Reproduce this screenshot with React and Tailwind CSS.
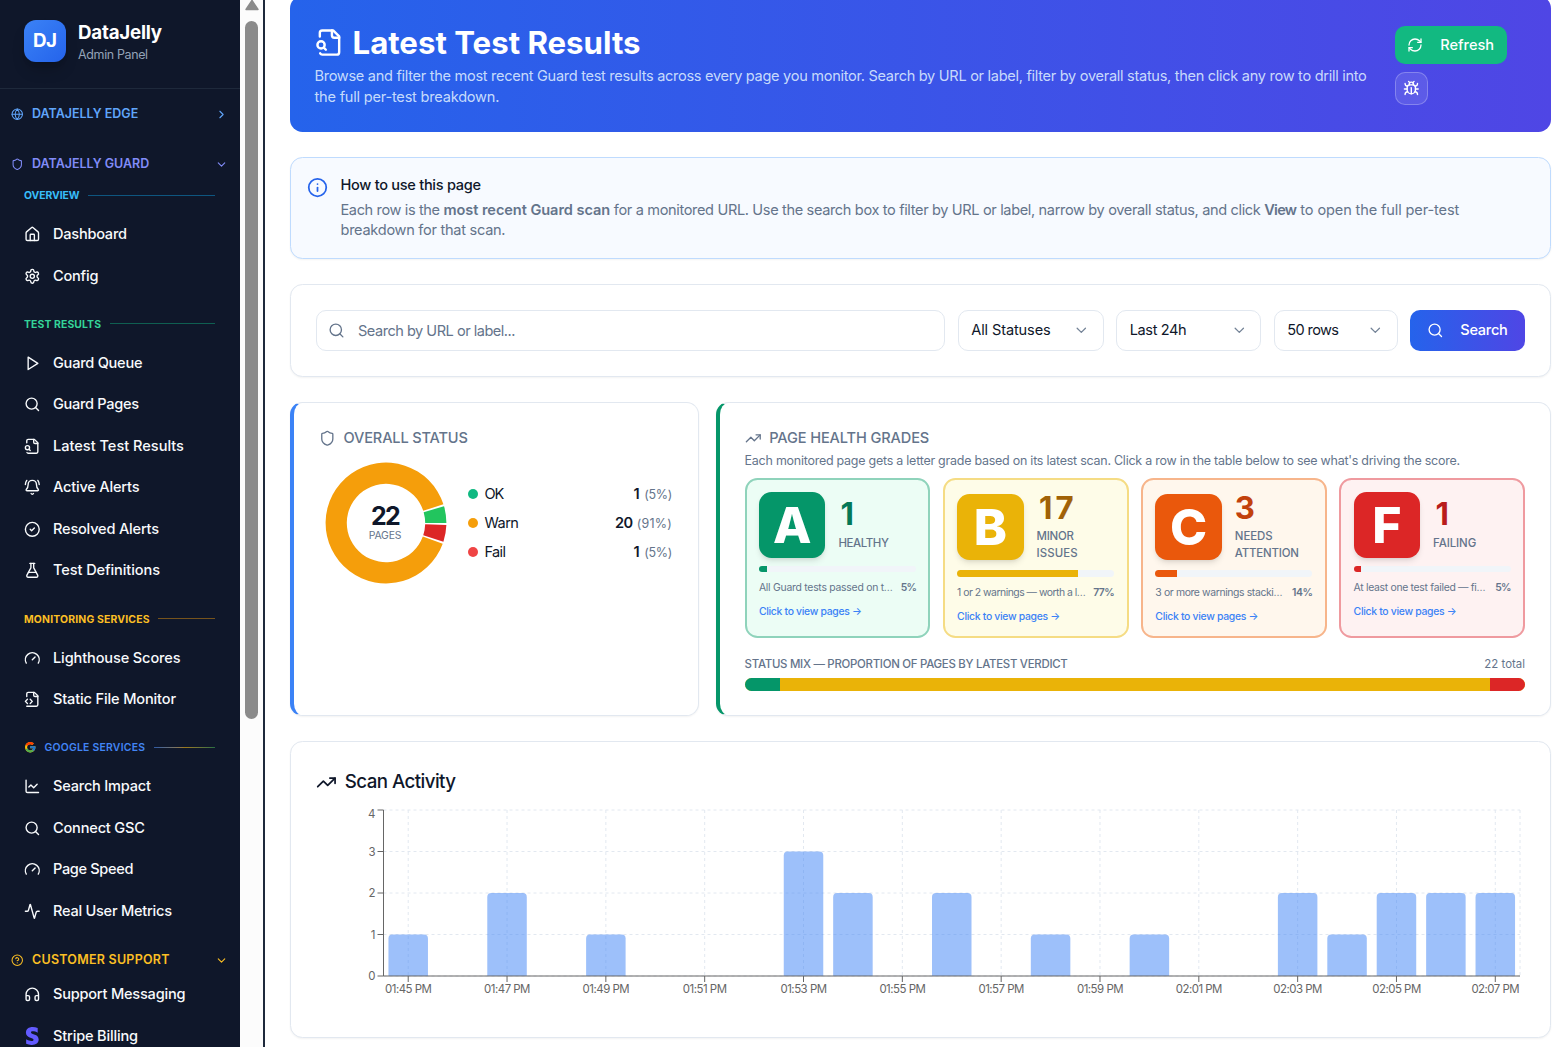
import React from 'react';
import {
  Globe, Shield, ChevronRight, ChevronDown, House, Search, BellRing, CircleCheck, FlaskConical,
  Gauge, ChartLine, Activity, CircleQuestionMark, Headphones, RefreshCw, Bug, Info, TrendingUp,
} from 'lucide-react';
import { FcGoogle } from 'react-icons/fc';
import { FaStripeS } from 'react-icons/fa6';

function Icon({ className, strokeWidth = 2, children }) {
  return (
    <svg viewBox="0 0 24 24" fill="none" stroke="currentColor" strokeWidth={strokeWidth} strokeLinecap="round" strokeLinejoin="round" className={className}>
      {children}
    </svg>
  );
}

const FileSearchIcon = (p) => (
  <Icon {...p}>
    <path d="M14 2v4a2 2 0 0 0 2 2h4" />
    <path d="M4.268 21a2 2 0 0 0 1.727 1H18a2 2 0 0 0 2-2V7l-5-5H6a2 2 0 0 0-2 2v3" />
    <path d="m9 18-1.5-1.5" />
    <circle cx="5" cy="14" r="3" />
  </Icon>
);

const FileCodeIcon = (p) => (
  <Icon {...p}>
    <path d="M4 22h14a2 2 0 0 0 2-2V7l-5-5H6a2 2 0 0 0-2 2v4" />
    <path d="M14 2v4a2 2 0 0 0 2 2h4" />
    <path d="m5 12-3 3 3 3" />
    <path d="m9 18 3-3-3-3" />
  </Icon>
);

const PlayIcon = (p) => (
  <Icon {...p}>
    <polygon points="6 3 20 12 6 21 6 3" />
  </Icon>
);

const GearIcon = (p) => (
  <Icon {...p}>
    <path d="M12.22 2h-.44a2 2 0 0 0-2 2v.18a2 2 0 0 1-1 1.73l-.43.25a2 2 0 0 1-2 0l-.15-.08a2 2 0 0 0-2.73.73l-.22.38a2 2 0 0 0 .73 2.73l.15.1a2 2 0 0 1 1 1.72v.51a2 2 0 0 1-1 1.74l-.15.09a2 2 0 0 0-.73 2.73l.22.38a2 2 0 0 0 2.73.73l.15-.08a2 2 0 0 1 2 0l.43.25a2 2 0 0 1 1 1.73V20a2 2 0 0 0 2 2h.44a2 2 0 0 0 2-2v-.18a2 2 0 0 1 1-1.73l.43-.25a2 2 0 0 1 2 0l.15.08a2 2 0 0 0 2.73-.73l.22-.39a2 2 0 0 0-.73-2.73l-.15-.08a2 2 0 0 1-1-1.74v-.5a2 2 0 0 1 1-1.74l.15-.09a2 2 0 0 0 .73-2.73l-.22-.38a2 2 0 0 0-2.73-.73l-.15.08a2 2 0 0 1-2 0l-.43-.25a2 2 0 0 1-1-1.73V4a2 2 0 0 0-2-2z" />
    <circle cx="12" cy="12" r="3" />
  </Icon>
);

const StripeIcon = () => <FaStripeS className="h-[18px] w-[16.6px] text-[#635bff]" />;

const SECTIONS = [
  {
    title: 'OVERVIEW', track: 'tracking-[-0.08px]', color: 'text-[#38bdf8]', line: 'bg-[#0ea5e9]/45', row: 'h-[24.5px] pb-[12px]',
    items: [
      [House, 'Dashboard', 'tracking-[-0.23px]'],
      [GearIcon, 'Config', 'tracking-[-0.19px]'],
    ],
  },
  {
    title: 'TEST RESULTS', track: 'tracking-[0.12px]', color: 'text-[#34d399]', line: 'bg-[#10b981]/45', row: 'h-[45.6px] pt-[9.2px]',
    items: [
      [PlayIcon, 'Guard Queue', 'tracking-[-0.24px]'],
      [Search, 'Guard Pages', 'tracking-[-0.3px]'],
      [FileSearchIcon, 'Latest Test Results', ''],
      [BellRing, 'Active Alerts', 'tracking-[-0.19px]'],
      [CircleCheck, 'Resolved Alerts', 'tracking-[-0.19px]'],
      [FlaskConical, 'Test Definitions', 'tracking-[-0.08px]'],
    ],
  },
  {
    title: 'MONITORING SERVICES', track: 'tracking-[0.18px]', color: 'text-[#fbbf24]', line: 'bg-[#f59e0b]/45', row: 'h-[45.6px] pt-[9.2px]',
    items: [
      [Gauge, 'Lighthouse Scores', 'tracking-[-0.12px]'],
      [FileCodeIcon, 'Static File Monitor', 'tracking-[-0.14px]'],
    ],
  },
  {
    title: 'GOOGLE SERVICES', google: true, track: 'tracking-[0.24px]', color: 'text-[#4285f4]', line: 'bg-linear-to-r from-[#4285f4]/60 via-[#fbbc05]/60 to-[#34a853]/60', row: 'h-[45.6px] pt-[9.2px]',
    items: [
      [ChartLine, 'Search Impact', 'tracking-[-0.2px]'],
      [Search, 'Connect GSC', 'tracking-[-0.17px]'],
      [Gauge, 'Page Speed', 'tracking-[-0.33px]'],
      [Activity, 'Real User Metrics', 'tracking-[-0.24px]'],
    ],
  },
];

function NavItem({ item: [I, label, track] }) {
  return (
    <div className="flex h-[41.55px] shrink-0 items-center gap-[12.4px] pl-6 text-[14.56px] font-medium text-[#f8fafc]">
      <I className="h-[16.6px] w-[16.6px] shrink-0" strokeWidth={2} />
      <span className={`pt-[1.4px] ${track}`}>{label}</span>
    </div>
  );
}

function GroupRow({ icon: I, label, track = '', color, open, row }) {
  return (
    <div className={`flex shrink-0 items-center pr-3 pl-[11px] text-[12.48px] font-semibold ${row} ${color}`}>
      <I className="mr-[8.5px] h-[12.5px] w-[12.5px]" strokeWidth={2} />
      <span className={track}>{label}</span>
      {open ? <ChevronDown className="ml-auto h-[13px] w-[13px]" /> : <ChevronRight className="ml-auto h-[13px] w-[13px]" />}
    </div>
  );
}

function Sidebar() {
  return (
    <aside className="flex h-full w-[240px] shrink-0 flex-col overflow-hidden bg-[#0f172a]">
      <div className="flex h-[89px] shrink-0 items-start gap-[12.5px] border-b border-[#1e293b] pt-5 pl-6">
        <div className="flex h-[41.6px] w-[41.6px] items-center justify-center rounded-[12px] bg-linear-to-br from-[#3b82f6] to-[#2563eb] text-[18.72px] font-bold tracking-[-0.5px] text-white shadow-lg shadow-black/20">DJ</div>
        <div>
          <div className="text-[18.72px] leading-[25px] font-bold tracking-[-0.23px] text-white">DataJelly</div>
          <div className="text-[12.48px] leading-[19px] tracking-[-0.37px] text-[#94a3b8]">Admin Panel</div>
        </div>
      </div>
      <GroupRow icon={Globe} label="DATAJELLY EDGE" color="text-[#60a5fa]" row="h-[50px]" />
      <GroupRow icon={Shield} label="DATAJELLY GUARD" color="text-[#818cf8]" row="h-[50px]" open />
      {SECTIONS.map((s) => (
        <React.Fragment key={s.title}>
          <div className={`flex shrink-0 items-center pr-[25px] pl-6 ${s.row}`}>
            {s.google && <FcGoogle className="mr-[8px] h-[12.5px] w-[12.5px]" />}
            <span className={`pt-px text-[10.4px] whitespace-nowrap ${s.google ? 'font-semibold' : 'font-bold'} ${s.track} ${s.color}`}>{s.title}</span>
            <span className={`ml-[8.5px] h-px flex-1 ${s.line}`} />
          </div>
          {s.items.map((it) => <NavItem key={it[1]} item={it} />)}
        </React.Fragment>
      ))}
      <GroupRow icon={CircleQuestionMark} label="CUSTOMER SUPPORT" track="tracking-[0.26px]" color="text-[#fbbf24]" row="h-[41.7px] pt-[15px]" open />
      <NavItem item={[Headphones, 'Support Messaging', 'tracking-[-0.21px]']} />
      <NavItem item={[StripeIcon, 'Stripe Billing', 'tracking-[-0.17px]']} />
    </aside>
  );
}

function Scrollbar() {
  return (
    <div className="flex h-full w-[25px] shrink-0 flex-col items-center border-r-2 border-[#1e293b] bg-[#fcfcfc]">
      <svg viewBox="0 0 14 11" className="h-[11px] w-[14px] shrink-0">
        <path d="M7 0.5 L13 9.5 H1 Z" fill="#8b8b8b" stroke="#8b8b8b" strokeWidth="1.4" strokeLinejoin="round" />
      </svg>
      <div className="mt-[10px] h-[698px] w-[13px] rounded-full bg-[#8b8b8b]" />
    </div>
  );
}

function Header() {
  return (
    <header className="-mt-1 flex h-[136px] shrink-0 items-start rounded-[12.5px] bg-linear-to-r/srgb from-[#2563eb] to-[#4f46e5] pt-[28px] pl-[24.5px] text-white">
      <div className="w-[1080.5px] shrink-0 pt-px">
        <h1 className="flex items-center gap-[9px] text-[31.2px] leading-[37.4px] font-bold">
          <FileSearchIcon className="mt-[-3px] h-[29px] w-[29px]" />
          <span>Latest Test Results</span>
        </h1>
        <p className="mt-[4px] text-[14.56px] leading-[20.8px] whitespace-nowrap text-[#dbeafe]/90">
          <span className="tracking-[-0.288px]">Browse and filter the most recent Guard test results across every page you monitor. Search by URL or label, filter by overall status, then click any row to drill into</span>
          <br />
          <span className="tracking-[-0.2px]">the full per-test breakdown.</span>
        </p>
      </div>
      <div className="mt-[2px] flex flex-col gap-[8.3px]">
        <button className="flex h-[37.5px] w-[112px] items-center rounded-[10px] bg-[#12b981] pl-[12px] text-[14.56px] font-medium text-white">
          <RefreshCw className="mr-[17.3px] h-[16px] w-[16px]" strokeWidth={1.9} />
          <span className="pt-[1.6px]">Refresh</span>
        </button>
        <button className="flex h-[33px] w-[33px] items-center justify-center rounded-[10px] border border-white/25 bg-white/10">
          <Bug className="h-[16.6px] w-[16.6px]" />
        </button>
      </div>
    </header>
  );
}

function InfoCard() {
  return (
    <section className="flex h-[102px] shrink-0 rounded-[12.5px] border border-[#bfdbfe] bg-[#f7faff] pl-[16px] shadow-xs">
      <Info className="mt-[18.5px] h-[21px] w-[21px] text-[#2563eb]" />
      <div className="mt-[17px] ml-[12.5px] text-[14.56px] whitespace-nowrap">
        <h2 className="leading-[20.8px] font-medium tracking-[-0.28px] text-[#0f172a]">How to use this page</h2>
        <p className="mt-[4.7px] leading-[20px] text-[#64748b]">
          <span className="tracking-[-0.37px]">Each row is the </span>
          <strong className="font-semibold tracking-[-0.05px]">most recent Guard scan</strong>
          <span className="tracking-[-0.35px]"> for a monitored URL. Use the search box to filter by URL or label, narrow by overall status, and click </span>
          <strong className="font-semibold tracking-[-0.7px]">View</strong>
          <span className="tracking-[-0.12px]"> to open the full per-test</span>
          <br />
          <span className="tracking-[-0.27px]">breakdown for that scan.</span>
        </p>
      </div>
    </section>
  );
}

function Select({ label, className }) {
  return (
    <div className={`flex h-[41.5px] shrink-0 items-center justify-between rounded-[10px] border border-[#e2e8f0] bg-white pr-[13px] pl-[12.5px] text-[14.56px] text-[#0f172a] ${className}`}>
      <span className="pt-[1.6px]">{label}</span>
      <ChevronDown className="h-[16.6px] w-[16.6px] text-[#64748b]/90" strokeWidth={1.8} />
    </div>
  );
}

function Filters() {
  return (
    <section className="flex h-[92.5px] shrink-0 items-center gap-[12.5px] rounded-[12.5px] border border-[#e2e8f0] bg-white px-[25px] shadow-xs">
      <div className="flex h-[41.5px] flex-1 items-center rounded-[10px] border border-[#e2e8f0] pl-[11px] text-[#64748b]">
        <Search className="h-[17px] w-[17px]" strokeWidth={1.9} />
        <span className="ml-[13px] pt-[3px] text-[14.56px] tracking-[-0.49px]">Search by URL or label...</span>
      </div>
      <Select label="All Statuses" className="w-[146px] tracking-[-0.11px]" />
      <Select label="Last 24h" className="w-[145px] tracking-[-0.37px]" />
      <Select label="50 rows" className="w-[124.2px] tracking-[-0.6px]" />
      <button className="flex h-[41.5px] w-[114.6px] items-center rounded-[10px] bg-linear-to-r/srgb from-[#2563eb] to-[#4f46e5] pl-[16.3px] text-[14.56px] font-medium tracking-[-0.27px] text-white">
        <Search className="mr-[17px] h-[16.6px] w-[16.6px]" strokeWidth={1.9} />
        <span className="pt-[1.6px]">Search</span>
      </button>
    </section>
  );
}

function arc(start, end, outer, inner) {
  const pt = (deg, r) => {
    const a = (deg * Math.PI) / 180;
    return `${(61 + r * Math.cos(a)).toFixed(2)} ${(61 - r * Math.sin(a)).toFixed(2)}`;
  };
  const large = end - start > 180 ? 1 : 0;
  return `M${pt(start, outer)} A${outer} ${outer} 0 ${large} 0 ${pt(end, outer)} L${pt(end, inner)} A${inner} ${inner} 0 ${large} 1 ${pt(start, inner)} Z`;
}

const LEGEND = [
  ['OK', '1', '(5%)', 'bg-[#10b981]', 'tracking-[-0.9px]', '', 'tracking-[-0.3px]'],
  ['Warn', '20', '(91%)', 'bg-[#f59e0b]', 'tracking-[-0.5px]', 'tracking-[-0.7px]', 'tracking-[0.2px]'],
  ['Fail', '1', '(5%)', 'bg-[#ef4444]', 'tracking-[-0.6px]', '', 'tracking-[-0.3px]'],
];

function OverallStatus() {
  return (
    <section className="h-[314.5px] w-[409px] shrink-0 rounded-[12.5px] border border-l-4 border-[#e2e8f0] border-l-[#3b82f6] bg-white pt-[25px] pr-[26px] pl-[25px] shadow-xs">
      <h3 className="flex h-[21px] items-center gap-[8px] text-[14.56px] font-medium tracking-[-0.15px] text-[#64748b]">
        <Shield className="h-[16.6px] w-[16.6px]" strokeWidth={1.9} />
        <span className="pt-[1.6px]">OVERALL STATUS</span>
      </h3>
      <div className="mt-[13.6px] flex items-center">
        <div className="ml-[6px] grid h-[122px] w-[122px] shrink-0 place-items-center">
          <svg viewBox="0 0 122 122" className="col-start-1 row-start-1 h-[122px] w-[122px]">
            <path d={arc(0, 16.1, 60.4, 39.2)} fill="#22c55e" />
            <path d={arc(18.1, 339.9, 60.4, 39.2)} fill="#f59e0b" />
            <path d={arc(341.9, 358, 60.4, 39.2)} fill="#dc2626" />
          </svg>
          <div className="col-start-1 row-start-1 flex flex-col items-center pr-[2px]">
            <span className="text-[25px] leading-[25px] font-bold tracking-[-1.8px] text-[#0f172a]">22</span>
            <span className="text-[10.4px] leading-[13px] tracking-[-0.2px] text-[#64748b]">PAGES</span>
          </div>
        </div>
        <ul className="ml-[21px] flex-1">
          {LEGEND.map(([name, n, pct, dot, t1, t2, t3]) => (
            <li key={name} className="flex h-[29px] items-center text-[14.56px] text-[#0f172a]">
              <span className={`mr-[6px] h-[10.4px] w-[10.4px] rounded-full ${dot}`} />
              <span className={`pt-px ${t1}`}>{name}</span>
              <span className={`ml-auto pt-px font-semibold ${t2}`}>{n}</span>
              <span className={`ml-[4.5px] pt-[2px] text-[12.48px] text-[#64748b] ${t3}`}>{pct}</span>
            </li>
          ))}
        </ul>
      </div>
    </section>
  );
}

const GRADES = [
  {
    g: 'A', n: '1', label: ['HEALTHY'], lt: ['tracking-[-0.4px]'], desc: 'All Guard tests passed on t…', dt: 'tracking-[-0.25px]', pct: '5%', pt: 'tracking-[-0.8px]', nc: 'pl-[2px]',
    card: 'border-[#8fd3bb] bg-[#ecfdf5]', tile: 'bg-[#059669]', num: 'text-[#047857]', fill: 'w-[5%] bg-[#059669]',
  },
  {
    g: 'B', n: '17', label: ['MINOR', 'ISSUES'], lt: ['tracking-[-0.3px]', 'tracking-[0.1px]'], desc: '1 or 2 warnings — worth a l…', dt: 'tracking-[-0.5px]', pct: '77%', pt: 'tracking-[-0.5px]', nc: 'pl-[2.5px] tracking-[3px]',
    card: 'border-[#f5dc84] bg-[#fefce8]', tile: 'bg-[#eab308]', num: 'text-[#a16207]', fill: 'w-[77%] bg-[#eab308]',
  },
  {
    g: 'C', n: '3', label: ['NEEDS', 'ATTENTION'], lt: ['tracking-[-0.1px]', 'tracking-[-0.2px]'], desc: '3 or more warnings stacki…', dt: 'tracking-[-0.37px]', pct: '14%', pt: 'tracking-[-0.4px]', nc: '',
    card: 'border-[#f7b58b] bg-[#fff7ed]', tile: 'bg-[#ea580c]', num: 'text-[#c2410c]', fill: 'w-[14%] bg-[#ea580c]',
  },
  {
    g: 'F', n: '1', label: ['FAILING'], lt: ['tracking-[-0.09px]'], desc: 'At least one test failed — fi…', dt: 'tracking-[-0.3px]', pct: '5%', pt: 'tracking-[-0.8px]', nc: 'pl-[2.5px]',
    card: 'border-[#ef9a9f] bg-[#fef2f2]', tile: 'bg-[#dc2626]', num: 'text-[#b91c1c]', fill: 'w-[5%] bg-[#dc2626]',
  },
];

function GradeCard({ d }) {
  return (
    <div className={`h-[160px] rounded-[12.5px] border-2 px-[12.3px] pt-[12px] ${d.card}`}>
      <div className="flex items-center gap-[13px]">
        <div className={`flex h-[66.5px] w-[66.5px] shrink-0 items-center justify-center rounded-[12.5px] text-[50px] leading-none font-extrabold text-white shadow-md ${d.tile}`}>{d.g}</div>
        <div className="pt-[1.5px]">
          <div className={`text-[31.2px] leading-[31.2px] font-bold ${d.num} ${d.nc}`}>{d.n}</div>
          <div className="mt-[4px] text-[11.44px] leading-[17px] font-medium text-[#64748b]">
            {d.label.map((l, i) => <div key={l} className={d.lt[i]}>{l}</div>)}
          </div>
        </div>
      </div>
      <div className="mt-[8.2px] h-[6.2px] overflow-hidden rounded-full bg-[#f1f5f9]">
        <div className={`h-full ${d.fill}`} />
      </div>
      <div className="mt-[8.4px] flex h-[15px] items-center justify-between text-[10.4px] whitespace-nowrap text-[#64748b]">
        <span className={d.dt}>{d.desc}</span>
        <span className={`font-semibold ${d.pt}`}>{d.pct}</span>
      </div>
      <div className="mt-[8.6px] text-[10.4px] leading-[15px] font-medium tracking-[-0.3px] whitespace-nowrap text-[#3b82f6]">Click to view pages →</div>
    </div>
  );
}

function HealthGrades() {
  return (
    <section className="h-[314.5px] flex-1 rounded-[12.5px] border border-l-4 border-[#e2e8f0] border-l-[#059669] bg-white pt-[25px] pr-[25px] pl-[24.6px] shadow-xs">
      <h3 className="flex h-[21px] items-center gap-[8px] text-[14.56px] font-medium tracking-[-0.1px] text-[#64748b]">
        <TrendingUp className="h-[16.6px] w-[16.6px]" strokeWidth={1.9} />
        <span className="pt-[1.6px]">PAGE HEALTH GRADES</span>
      </h3>
      <p className="mt-[3px] text-[12.48px] leading-[18px] tracking-[-0.242px] whitespace-nowrap text-[#64748b]">
        Each monitored page gets a letter grade based on its latest scan. Click a row in the table below to see what's driving the score.
      </p>
      <div className="mt-[8px] grid grid-cols-4 gap-[12.5px]">
        {GRADES.map((d) => <GradeCard key={d.g} d={d} />)}
      </div>
      <div className="mt-[19px] flex h-[16px] items-center justify-between whitespace-nowrap text-[#64748b]">
        <span className="text-[11.44px] font-medium tracking-[-0.285px]">STATUS MIX — PROPORTION OF PAGES BY LATEST VERDICT</span>
        <span className="text-[11.44px]">22 total</span>
      </div>
      <div className="mt-[5px] flex h-[13px] overflow-hidden rounded-full bg-[#eab308]">
        <div className="w-[4.5%] bg-[#059669]" />
        <div className="flex-1 bg-[#eab308]" />
        <div className="w-[4.5%] bg-[#dc2626]" />
      </div>
    </section>
  );
}

const SCANS = [1, 0, 2, 0, 1, 0, 0, 0, 3, 2, 0, 2, 0, 1, 0, 1, 0, 0, 2, 1, 2, 2, 2];
const LABELS = ['01:45 PM', '01:47 PM', '01:49 PM', '01:51 PM', '01:53 PM', '01:55 PM', '01:57 PM', '01:59 PM', '02:01 PM', '02:03 PM', '02:05 PM', '02:07 PM'];
const X0 = 67.5;
const X1 = 1204;
const STEP = (X1 - X0) / 23;
const UNIT = 41.5;
const Y0 = 171;

function barPath(i, v) {
  const w = 39.5;
  const x = X0 + STEP * (i + 0.5) - w / 2;
  const y = Y0 - v * UNIT;
  return `M${x} ${Y0} V${y + 4} Q${x} ${y} ${x + 4} ${y} H${x + w - 4} Q${x + w} ${y} ${x + w} ${y + 4} V${Y0} Z`;
}

function ScanActivity() {
  return (
    <section className="h-[297px] shrink-0 rounded-[12.5px] border border-[#e2e8f0] bg-white px-[25px] pt-[26.5px] shadow-xs">
      <h3 className="flex h-[27px] items-center gap-[8px] text-[18.72px] font-medium tracking-[-0.55px] text-[#0f172a]">
        <TrendingUp className="h-[20.8px] w-[20.8px]" />
        Scan Activity
      </h3>
      <svg viewBox="0 0 1209 210" className="mt-[9.3px] h-[210px] w-[1209px]">
        <g stroke="#e2e8f0" strokeDasharray="3 3">
          {[0, 1, 2, 3, 4].map((v) => <line key={v} x1={X0} x2={X1} y1={Y0 - v * UNIT} y2={Y0 - v * UNIT} />)}
          {LABELS.map((l, i) => <line key={l} x1={X0 + STEP * (2 * i + 0.5)} x2={X0 + STEP * (2 * i + 0.5)} y1={5} y2={Y0} />)}
          <line x1={X1} x2={X1} y1={5} y2={Y0} />
        </g>
        <g fill="#3b82f6" fillOpacity="0.5">
          {SCANS.map((v, i) => (v ? <path key={i} d={barPath(i, v)} /> : null))}
        </g>
        <g stroke="#666">
          <line x1={X0} x2={X0} y1={5} y2={Y0} />
          <line x1={X0} x2={X1} y1={Y0} y2={Y0} />
          {[0, 1, 2, 3, 4].map((v) => <line key={v} x1={X0 - 6} x2={X0} y1={Y0 - v * UNIT} y2={Y0 - v * UNIT} />)}
          {LABELS.map((l, i) => <line key={l} x1={X0 + STEP * (2 * i + 0.5)} x2={X0 + STEP * (2 * i + 0.5)} y1={Y0} y2={Y0 + 6} />)}
        </g>
        <g fill="#666" className="text-[11.44px]">
          {[0, 1, 2, 3, 4].map((v) => <text key={v} x={X0 - 8} y={Y0 - v * UNIT + (v === 4 ? 8 : 4)} textAnchor="end">{v}</text>)}
          {LABELS.map((l, i) => <text key={l} x={X0 + STEP * (2 * i + 0.5)} y={Y0 + 17} textAnchor="middle" className="tracking-[-0.5px]">{l}</text>)}
        </g>
      </svg>
    </section>
  );
}

export default function App() {
  return (
    <div className="flex h-[1047px] w-[1559px] overflow-hidden bg-white font-[Inter,sans-serif]">
      <Sidebar />
      <Scrollbar />
      <main className="flex h-full flex-1 flex-col gap-[25px] overflow-hidden pr-2 pl-[25px]">
        <Header />
        <InfoCard />
        <Filters />
        <div className="flex shrink-0 gap-[17px]">
          <OverallStatus />
          <HealthGrades />
        </div>
        <ScanActivity />
      </main>
    </div>
  );
}
